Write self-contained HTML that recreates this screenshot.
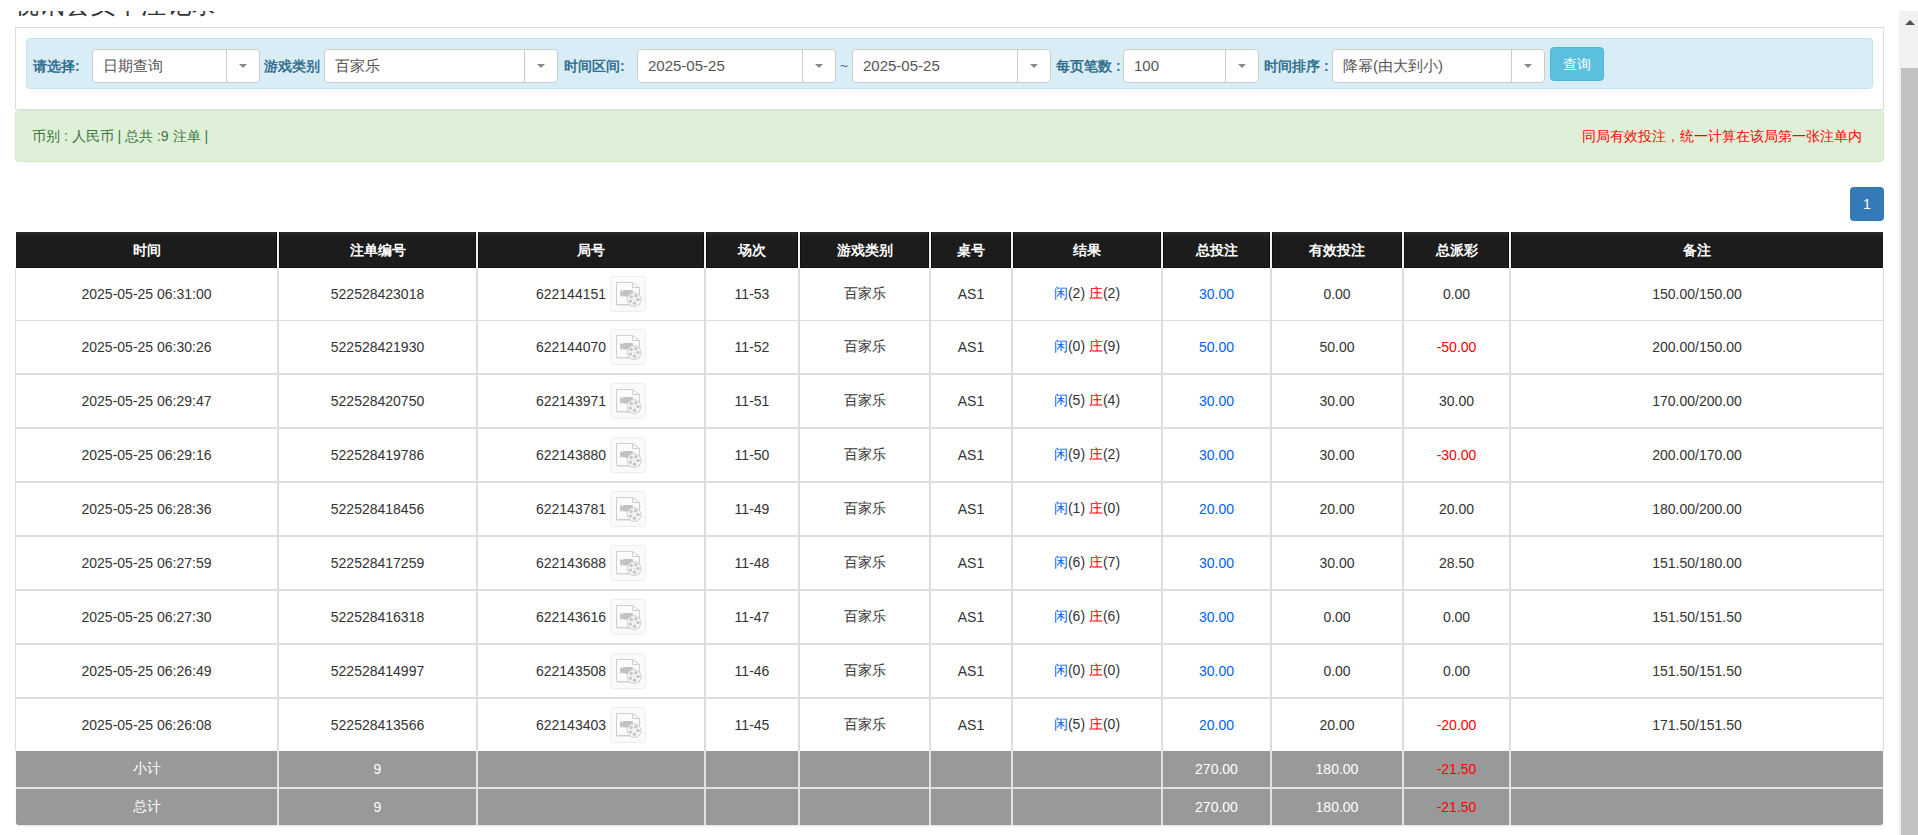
<!DOCTYPE html><html><head><meta charset="utf-8"><title>视讯会员下注记录</title><style>
html,body{margin:0;padding:0;background:#fff;}
body{width:1918px;height:835px;overflow:hidden;position:relative;font-family:"Liberation Sans",sans-serif;font-size:14px;color:#333;}
.ab{position:absolute;box-sizing:border-box;}
.c{position:absolute;display:flex;align-items:center;justify-content:center;white-space:nowrap;box-sizing:border-box;}
.sel{position:absolute;box-sizing:border-box;height:34px;top:49px;border:1px solid #ccc;border-radius:4px;background:#fff;}
.sel .t{position:absolute;left:10px;top:0;height:32px;line-height:32px;font-size:15px;color:#555;white-space:nowrap;}
.sel .sp{position:absolute;right:32px;top:0;width:1px;height:32px;background:#ccc;}
.sel .cr{position:absolute;right:12px;top:14px;width:0;height:0;border-left:4px solid transparent;border-right:4px solid transparent;border-top:4px solid #888;}
.lb{position:absolute;top:49px;height:34px;line-height:34px;font-weight:bold;color:#31708f;white-space:nowrap;font-size:14px;}
.hd{background:#1c1c1c;color:#fff;font-weight:bold;}
.vl{position:absolute;width:2px;}
.icon{position:absolute;width:36px;height:36px;box-sizing:border-box;border:1px solid #eee;border-radius:4px;background:#fafafa;}
.bl{color:#0062ff}.rd{color:#ff0000}

</style></head><body>
<div class="ab" style="left:14px;top:-12px;font-size:25px;line-height:32px;letter-spacing:0.45px;color:#333;white-space:nowrap;">视讯会员下注记录</div>
<div class="ab" style="left:0;top:0;width:1918px;height:11px;background:#fff;"></div>
<div class="ab" style="left:15px;top:27px;width:1869px;height:83px;border:1px solid #ddd;"></div>
<div class="ab" style="left:26px;top:38px;width:1847px;height:51px;border:1px solid #bce8f1;background:#d9edf7;border-radius:4px;"></div>
<div class="lb" style="left:33px;">请选择:</div>
<div class="sel" style="left:92px;width:168px;"><div class="t">日期查询</div><div class="sp"></div><div class="cr"></div></div>
<div class="lb" style="left:264px;">游戏类别</div>
<div class="sel" style="left:324px;width:234px;"><div class="t">百家乐</div><div class="sp"></div><div class="cr"></div></div>
<div class="lb" style="left:564px;">时间区间:</div>
<div class="sel" style="left:637px;width:199px;"><div class="t">2025-05-25</div><div class="sp"></div><div class="cr"></div></div>
<div class="lb" style="left:840px;font-weight:normal;">~</div>
<div class="sel" style="left:852px;width:199px;"><div class="t">2025-05-25</div><div class="sp"></div><div class="cr"></div></div>
<div class="lb" style="left:1056px;">每页笔数 :</div>
<div class="sel" style="left:1123px;width:136px;"><div class="t">100</div><div class="sp"></div><div class="cr"></div></div>
<div class="lb" style="left:1264px;">时间排序 :</div>
<div class="sel" style="left:1332px;width:213px;"><div class="t">降幂(由大到小)</div><div class="sp"></div><div class="cr"></div></div>
<div class="c" style="left:1550px;top:47px;width:54px;height:34px;background:#5bc0de;border:1px solid #46b8da;border-radius:4px;color:#fff;padding-top:2px;">查询</div>
<div class="ab" style="left:15px;top:110px;width:1869px;height:52px;border:1px solid #d6e9c6;background:#dff0d8;border-radius:4px;"></div>
<div class="ab" style="left:32px;top:126px;height:20px;line-height:20px;color:#3c763d;white-space:nowrap;">币别 : 人民币 | 总共 :9 注单 |</div>
<div class="ab" style="right:56px;top:126px;height:20px;line-height:20px;color:#ff0000;white-space:nowrap;">同局有效投注，统一计算在该局第一张注单内</div>
<div class="c" style="left:1850px;top:187px;width:34px;height:34px;background:#337ab7;border-radius:4px;color:#fff;">1</div>
<div class="ab hd" style="left:16px;top:232px;width:1867px;height:36px;background:linear-gradient(#2c2c2c,#1c1c1c 5px);border-bottom:1px solid #101010;"></div>
<div class="c" style="left:16px;top:233px;width:261px;height:36px;color:#fff;font-weight:bold;">时间</div>
<div class="c" style="left:279px;top:233px;width:197px;height:36px;color:#fff;font-weight:bold;">注单编号</div>
<div class="c" style="left:478px;top:233px;width:226px;height:36px;color:#fff;font-weight:bold;">局号</div>
<div class="c" style="left:706px;top:233px;width:92px;height:36px;color:#fff;font-weight:bold;">场次</div>
<div class="c" style="left:800px;top:233px;width:129px;height:36px;color:#fff;font-weight:bold;">游戏类别</div>
<div class="c" style="left:931px;top:233px;width:80px;height:36px;color:#fff;font-weight:bold;">桌号</div>
<div class="c" style="left:1013px;top:233px;width:148px;height:36px;color:#fff;font-weight:bold;">结果</div>
<div class="c" style="left:1163px;top:233px;width:107px;height:36px;color:#fff;font-weight:bold;">总投注</div>
<div class="c" style="left:1272px;top:233px;width:130px;height:36px;color:#fff;font-weight:bold;">有效投注</div>
<div class="c" style="left:1404px;top:233px;width:105px;height:36px;color:#fff;font-weight:bold;">总派彩</div>
<div class="c" style="left:1511px;top:233px;width:372px;height:36px;color:#fff;font-weight:bold;">备注</div>
<div class="ab" style="left:276px;top:232px;width:1px;height:36px;background:#101010;"></div>
<div class="ab" style="left:279px;top:232px;width:1px;height:36px;background:#101010;"></div>
<div class="ab" style="left:277px;top:232px;width:2px;height:36px;background:#f2f2f2;"></div>
<div class="ab" style="left:475px;top:232px;width:1px;height:36px;background:#101010;"></div>
<div class="ab" style="left:478px;top:232px;width:1px;height:36px;background:#101010;"></div>
<div class="ab" style="left:476px;top:232px;width:2px;height:36px;background:#f2f2f2;"></div>
<div class="ab" style="left:703px;top:232px;width:1px;height:36px;background:#101010;"></div>
<div class="ab" style="left:706px;top:232px;width:1px;height:36px;background:#101010;"></div>
<div class="ab" style="left:704px;top:232px;width:2px;height:36px;background:#f2f2f2;"></div>
<div class="ab" style="left:797px;top:232px;width:1px;height:36px;background:#101010;"></div>
<div class="ab" style="left:800px;top:232px;width:1px;height:36px;background:#101010;"></div>
<div class="ab" style="left:798px;top:232px;width:2px;height:36px;background:#f2f2f2;"></div>
<div class="ab" style="left:928px;top:232px;width:1px;height:36px;background:#101010;"></div>
<div class="ab" style="left:931px;top:232px;width:1px;height:36px;background:#101010;"></div>
<div class="ab" style="left:929px;top:232px;width:2px;height:36px;background:#f2f2f2;"></div>
<div class="ab" style="left:1010px;top:232px;width:1px;height:36px;background:#101010;"></div>
<div class="ab" style="left:1013px;top:232px;width:1px;height:36px;background:#101010;"></div>
<div class="ab" style="left:1011px;top:232px;width:2px;height:36px;background:#f2f2f2;"></div>
<div class="ab" style="left:1160px;top:232px;width:1px;height:36px;background:#101010;"></div>
<div class="ab" style="left:1163px;top:232px;width:1px;height:36px;background:#101010;"></div>
<div class="ab" style="left:1161px;top:232px;width:2px;height:36px;background:#f2f2f2;"></div>
<div class="ab" style="left:1269px;top:232px;width:1px;height:36px;background:#101010;"></div>
<div class="ab" style="left:1272px;top:232px;width:1px;height:36px;background:#101010;"></div>
<div class="ab" style="left:1270px;top:232px;width:2px;height:36px;background:#f2f2f2;"></div>
<div class="ab" style="left:1401px;top:232px;width:1px;height:36px;background:#101010;"></div>
<div class="ab" style="left:1404px;top:232px;width:1px;height:36px;background:#101010;"></div>
<div class="ab" style="left:1402px;top:232px;width:2px;height:36px;background:#f2f2f2;"></div>
<div class="ab" style="left:1508px;top:232px;width:1px;height:36px;background:#101010;"></div>
<div class="ab" style="left:1511px;top:232px;width:1px;height:36px;background:#101010;"></div>
<div class="ab" style="left:1509px;top:232px;width:2px;height:36px;background:#f2f2f2;"></div>
<div class="c" style="left:16px;top:268px;width:261px;height:52px;"><span>2025-05-25 06:31:00</span></div>
<div class="c" style="left:279px;top:268px;width:197px;height:52px;"><span>522528423018</span></div>
<div class="c" style="left:478px;top:268px;width:226px;height:52px;">622144151<span style="display:inline-block;width:4px"></span><span style="position:relative;display:inline-block;width:36px;height:36px;"><span class="icon" style="left:0;top:0"><svg width="36" height="36" viewBox="0 0 36 36" style="position:absolute;left:-1px;top:-1px"><path d="M6.5 6.5h16l7 5v17h-23z" fill="#fbfbfb" stroke="#cecece" stroke-width="1"/><path d="M22.5 6.5v5h7" fill="none" stroke="#cecece" stroke-width="1"/><path d="M7 29.5h16" stroke="#e6e6e6" stroke-width="1"/><path d="M10.2 14L12.4 15.3H13.1V13.9H22.8V20.6H13.1V19.6H12.4L10.2 21Z" fill="#c2c2c2"/><circle cx="24.1" cy="23.6" r="6.9" fill="#f6f6f6" stroke="#d0d0d0" stroke-width="1"/><circle cx="21.3" cy="20.6" r="1.7" fill="#c4c4c4"/><circle cx="25.8" cy="19.8" r="1.7" fill="#c4c4c4"/><circle cx="28" cy="23.6" r="1.7" fill="#c4c4c4"/><circle cx="24.5" cy="27.2" r="1.7" fill="#c4c4c4"/><circle cx="20.4" cy="25.1" r="1.7" fill="#c4c4c4"/><circle cx="23.8" cy="23.4" r="0.5" fill="#d0d0d0"/></svg></span></span></div>
<div class="c" style="left:706px;top:268px;width:92px;height:52px;"><span>11-53</span></div>
<div class="c" style="left:800px;top:268px;width:129px;height:52px;"><span>百家乐</span></div>
<div class="c" style="left:931px;top:268px;width:80px;height:52px;"><span>AS1</span></div>
<div class="c" style="left:1013px;top:268px;width:148px;height:52px;"><span><span class="bl">闲</span>(2) <span class="rd">庄</span>(2)</span></div>
<div class="c" style="left:1163px;top:268px;width:107px;height:52px;"><span><span class="bl">30.00</span></span></div>
<div class="c" style="left:1272px;top:268px;width:130px;height:52px;"><span>0.00</span></div>
<div class="c" style="left:1404px;top:268px;width:105px;height:52px;"><span>0.00</span></div>
<div class="c" style="left:1511px;top:268px;width:372px;height:52px;"><span>150.00/150.00</span></div>
<div class="ab" style="left:15px;top:320px;width:1869px;height:1px;background:#ddd;"></div>
<div class="c" style="left:16px;top:321px;width:261px;height:52px;"><span>2025-05-25 06:30:26</span></div>
<div class="c" style="left:279px;top:321px;width:197px;height:52px;"><span>522528421930</span></div>
<div class="c" style="left:478px;top:321px;width:226px;height:52px;">622144070<span style="display:inline-block;width:4px"></span><span style="position:relative;display:inline-block;width:36px;height:36px;"><span class="icon" style="left:0;top:0"><svg width="36" height="36" viewBox="0 0 36 36" style="position:absolute;left:-1px;top:-1px"><path d="M6.5 6.5h16l7 5v17h-23z" fill="#fbfbfb" stroke="#cecece" stroke-width="1"/><path d="M22.5 6.5v5h7" fill="none" stroke="#cecece" stroke-width="1"/><path d="M7 29.5h16" stroke="#e6e6e6" stroke-width="1"/><path d="M10.2 14L12.4 15.3H13.1V13.9H22.8V20.6H13.1V19.6H12.4L10.2 21Z" fill="#c2c2c2"/><circle cx="24.1" cy="23.6" r="6.9" fill="#f6f6f6" stroke="#d0d0d0" stroke-width="1"/><circle cx="21.3" cy="20.6" r="1.7" fill="#c4c4c4"/><circle cx="25.8" cy="19.8" r="1.7" fill="#c4c4c4"/><circle cx="28" cy="23.6" r="1.7" fill="#c4c4c4"/><circle cx="24.5" cy="27.2" r="1.7" fill="#c4c4c4"/><circle cx="20.4" cy="25.1" r="1.7" fill="#c4c4c4"/><circle cx="23.8" cy="23.4" r="0.5" fill="#d0d0d0"/></svg></span></span></div>
<div class="c" style="left:706px;top:321px;width:92px;height:52px;"><span>11-52</span></div>
<div class="c" style="left:800px;top:321px;width:129px;height:52px;"><span>百家乐</span></div>
<div class="c" style="left:931px;top:321px;width:80px;height:52px;"><span>AS1</span></div>
<div class="c" style="left:1013px;top:321px;width:148px;height:52px;"><span><span class="bl">闲</span>(0) <span class="rd">庄</span>(9)</span></div>
<div class="c" style="left:1163px;top:321px;width:107px;height:52px;"><span><span class="bl">50.00</span></span></div>
<div class="c" style="left:1272px;top:321px;width:130px;height:52px;"><span>50.00</span></div>
<div class="c" style="left:1404px;top:321px;width:105px;height:52px;"><span><span class="rd">-50.00</span></span></div>
<div class="c" style="left:1511px;top:321px;width:372px;height:52px;"><span>200.00/150.00</span></div>
<div class="ab" style="left:15px;top:373px;width:1869px;height:2px;background:#ddd;"></div>
<div class="c" style="left:16px;top:375px;width:261px;height:52px;"><span>2025-05-25 06:29:47</span></div>
<div class="c" style="left:279px;top:375px;width:197px;height:52px;"><span>522528420750</span></div>
<div class="c" style="left:478px;top:375px;width:226px;height:52px;">622143971<span style="display:inline-block;width:4px"></span><span style="position:relative;display:inline-block;width:36px;height:36px;"><span class="icon" style="left:0;top:0"><svg width="36" height="36" viewBox="0 0 36 36" style="position:absolute;left:-1px;top:-1px"><path d="M6.5 6.5h16l7 5v17h-23z" fill="#fbfbfb" stroke="#cecece" stroke-width="1"/><path d="M22.5 6.5v5h7" fill="none" stroke="#cecece" stroke-width="1"/><path d="M7 29.5h16" stroke="#e6e6e6" stroke-width="1"/><path d="M10.2 14L12.4 15.3H13.1V13.9H22.8V20.6H13.1V19.6H12.4L10.2 21Z" fill="#c2c2c2"/><circle cx="24.1" cy="23.6" r="6.9" fill="#f6f6f6" stroke="#d0d0d0" stroke-width="1"/><circle cx="21.3" cy="20.6" r="1.7" fill="#c4c4c4"/><circle cx="25.8" cy="19.8" r="1.7" fill="#c4c4c4"/><circle cx="28" cy="23.6" r="1.7" fill="#c4c4c4"/><circle cx="24.5" cy="27.2" r="1.7" fill="#c4c4c4"/><circle cx="20.4" cy="25.1" r="1.7" fill="#c4c4c4"/><circle cx="23.8" cy="23.4" r="0.5" fill="#d0d0d0"/></svg></span></span></div>
<div class="c" style="left:706px;top:375px;width:92px;height:52px;"><span>11-51</span></div>
<div class="c" style="left:800px;top:375px;width:129px;height:52px;"><span>百家乐</span></div>
<div class="c" style="left:931px;top:375px;width:80px;height:52px;"><span>AS1</span></div>
<div class="c" style="left:1013px;top:375px;width:148px;height:52px;"><span><span class="bl">闲</span>(5) <span class="rd">庄</span>(4)</span></div>
<div class="c" style="left:1163px;top:375px;width:107px;height:52px;"><span><span class="bl">30.00</span></span></div>
<div class="c" style="left:1272px;top:375px;width:130px;height:52px;"><span>30.00</span></div>
<div class="c" style="left:1404px;top:375px;width:105px;height:52px;"><span>30.00</span></div>
<div class="c" style="left:1511px;top:375px;width:372px;height:52px;"><span>170.00/200.00</span></div>
<div class="ab" style="left:15px;top:427px;width:1869px;height:2px;background:#ddd;"></div>
<div class="c" style="left:16px;top:429px;width:261px;height:52px;"><span>2025-05-25 06:29:16</span></div>
<div class="c" style="left:279px;top:429px;width:197px;height:52px;"><span>522528419786</span></div>
<div class="c" style="left:478px;top:429px;width:226px;height:52px;">622143880<span style="display:inline-block;width:4px"></span><span style="position:relative;display:inline-block;width:36px;height:36px;"><span class="icon" style="left:0;top:0"><svg width="36" height="36" viewBox="0 0 36 36" style="position:absolute;left:-1px;top:-1px"><path d="M6.5 6.5h16l7 5v17h-23z" fill="#fbfbfb" stroke="#cecece" stroke-width="1"/><path d="M22.5 6.5v5h7" fill="none" stroke="#cecece" stroke-width="1"/><path d="M7 29.5h16" stroke="#e6e6e6" stroke-width="1"/><path d="M10.2 14L12.4 15.3H13.1V13.9H22.8V20.6H13.1V19.6H12.4L10.2 21Z" fill="#c2c2c2"/><circle cx="24.1" cy="23.6" r="6.9" fill="#f6f6f6" stroke="#d0d0d0" stroke-width="1"/><circle cx="21.3" cy="20.6" r="1.7" fill="#c4c4c4"/><circle cx="25.8" cy="19.8" r="1.7" fill="#c4c4c4"/><circle cx="28" cy="23.6" r="1.7" fill="#c4c4c4"/><circle cx="24.5" cy="27.2" r="1.7" fill="#c4c4c4"/><circle cx="20.4" cy="25.1" r="1.7" fill="#c4c4c4"/><circle cx="23.8" cy="23.4" r="0.5" fill="#d0d0d0"/></svg></span></span></div>
<div class="c" style="left:706px;top:429px;width:92px;height:52px;"><span>11-50</span></div>
<div class="c" style="left:800px;top:429px;width:129px;height:52px;"><span>百家乐</span></div>
<div class="c" style="left:931px;top:429px;width:80px;height:52px;"><span>AS1</span></div>
<div class="c" style="left:1013px;top:429px;width:148px;height:52px;"><span><span class="bl">闲</span>(9) <span class="rd">庄</span>(2)</span></div>
<div class="c" style="left:1163px;top:429px;width:107px;height:52px;"><span><span class="bl">30.00</span></span></div>
<div class="c" style="left:1272px;top:429px;width:130px;height:52px;"><span>30.00</span></div>
<div class="c" style="left:1404px;top:429px;width:105px;height:52px;"><span><span class="rd">-30.00</span></span></div>
<div class="c" style="left:1511px;top:429px;width:372px;height:52px;"><span>200.00/170.00</span></div>
<div class="ab" style="left:15px;top:481px;width:1869px;height:2px;background:#ddd;"></div>
<div class="c" style="left:16px;top:483px;width:261px;height:52px;"><span>2025-05-25 06:28:36</span></div>
<div class="c" style="left:279px;top:483px;width:197px;height:52px;"><span>522528418456</span></div>
<div class="c" style="left:478px;top:483px;width:226px;height:52px;">622143781<span style="display:inline-block;width:4px"></span><span style="position:relative;display:inline-block;width:36px;height:36px;"><span class="icon" style="left:0;top:0"><svg width="36" height="36" viewBox="0 0 36 36" style="position:absolute;left:-1px;top:-1px"><path d="M6.5 6.5h16l7 5v17h-23z" fill="#fbfbfb" stroke="#cecece" stroke-width="1"/><path d="M22.5 6.5v5h7" fill="none" stroke="#cecece" stroke-width="1"/><path d="M7 29.5h16" stroke="#e6e6e6" stroke-width="1"/><path d="M10.2 14L12.4 15.3H13.1V13.9H22.8V20.6H13.1V19.6H12.4L10.2 21Z" fill="#c2c2c2"/><circle cx="24.1" cy="23.6" r="6.9" fill="#f6f6f6" stroke="#d0d0d0" stroke-width="1"/><circle cx="21.3" cy="20.6" r="1.7" fill="#c4c4c4"/><circle cx="25.8" cy="19.8" r="1.7" fill="#c4c4c4"/><circle cx="28" cy="23.6" r="1.7" fill="#c4c4c4"/><circle cx="24.5" cy="27.2" r="1.7" fill="#c4c4c4"/><circle cx="20.4" cy="25.1" r="1.7" fill="#c4c4c4"/><circle cx="23.8" cy="23.4" r="0.5" fill="#d0d0d0"/></svg></span></span></div>
<div class="c" style="left:706px;top:483px;width:92px;height:52px;"><span>11-49</span></div>
<div class="c" style="left:800px;top:483px;width:129px;height:52px;"><span>百家乐</span></div>
<div class="c" style="left:931px;top:483px;width:80px;height:52px;"><span>AS1</span></div>
<div class="c" style="left:1013px;top:483px;width:148px;height:52px;"><span><span class="bl">闲</span>(1) <span class="rd">庄</span>(0)</span></div>
<div class="c" style="left:1163px;top:483px;width:107px;height:52px;"><span><span class="bl">20.00</span></span></div>
<div class="c" style="left:1272px;top:483px;width:130px;height:52px;"><span>20.00</span></div>
<div class="c" style="left:1404px;top:483px;width:105px;height:52px;"><span>20.00</span></div>
<div class="c" style="left:1511px;top:483px;width:372px;height:52px;"><span>180.00/200.00</span></div>
<div class="ab" style="left:15px;top:535px;width:1869px;height:2px;background:#ddd;"></div>
<div class="c" style="left:16px;top:537px;width:261px;height:52px;"><span>2025-05-25 06:27:59</span></div>
<div class="c" style="left:279px;top:537px;width:197px;height:52px;"><span>522528417259</span></div>
<div class="c" style="left:478px;top:537px;width:226px;height:52px;">622143688<span style="display:inline-block;width:4px"></span><span style="position:relative;display:inline-block;width:36px;height:36px;"><span class="icon" style="left:0;top:0"><svg width="36" height="36" viewBox="0 0 36 36" style="position:absolute;left:-1px;top:-1px"><path d="M6.5 6.5h16l7 5v17h-23z" fill="#fbfbfb" stroke="#cecece" stroke-width="1"/><path d="M22.5 6.5v5h7" fill="none" stroke="#cecece" stroke-width="1"/><path d="M7 29.5h16" stroke="#e6e6e6" stroke-width="1"/><path d="M10.2 14L12.4 15.3H13.1V13.9H22.8V20.6H13.1V19.6H12.4L10.2 21Z" fill="#c2c2c2"/><circle cx="24.1" cy="23.6" r="6.9" fill="#f6f6f6" stroke="#d0d0d0" stroke-width="1"/><circle cx="21.3" cy="20.6" r="1.7" fill="#c4c4c4"/><circle cx="25.8" cy="19.8" r="1.7" fill="#c4c4c4"/><circle cx="28" cy="23.6" r="1.7" fill="#c4c4c4"/><circle cx="24.5" cy="27.2" r="1.7" fill="#c4c4c4"/><circle cx="20.4" cy="25.1" r="1.7" fill="#c4c4c4"/><circle cx="23.8" cy="23.4" r="0.5" fill="#d0d0d0"/></svg></span></span></div>
<div class="c" style="left:706px;top:537px;width:92px;height:52px;"><span>11-48</span></div>
<div class="c" style="left:800px;top:537px;width:129px;height:52px;"><span>百家乐</span></div>
<div class="c" style="left:931px;top:537px;width:80px;height:52px;"><span>AS1</span></div>
<div class="c" style="left:1013px;top:537px;width:148px;height:52px;"><span><span class="bl">闲</span>(6) <span class="rd">庄</span>(7)</span></div>
<div class="c" style="left:1163px;top:537px;width:107px;height:52px;"><span><span class="bl">30.00</span></span></div>
<div class="c" style="left:1272px;top:537px;width:130px;height:52px;"><span>30.00</span></div>
<div class="c" style="left:1404px;top:537px;width:105px;height:52px;"><span>28.50</span></div>
<div class="c" style="left:1511px;top:537px;width:372px;height:52px;"><span>151.50/180.00</span></div>
<div class="ab" style="left:15px;top:589px;width:1869px;height:2px;background:#ddd;"></div>
<div class="c" style="left:16px;top:591px;width:261px;height:52px;"><span>2025-05-25 06:27:30</span></div>
<div class="c" style="left:279px;top:591px;width:197px;height:52px;"><span>522528416318</span></div>
<div class="c" style="left:478px;top:591px;width:226px;height:52px;">622143616<span style="display:inline-block;width:4px"></span><span style="position:relative;display:inline-block;width:36px;height:36px;"><span class="icon" style="left:0;top:0"><svg width="36" height="36" viewBox="0 0 36 36" style="position:absolute;left:-1px;top:-1px"><path d="M6.5 6.5h16l7 5v17h-23z" fill="#fbfbfb" stroke="#cecece" stroke-width="1"/><path d="M22.5 6.5v5h7" fill="none" stroke="#cecece" stroke-width="1"/><path d="M7 29.5h16" stroke="#e6e6e6" stroke-width="1"/><path d="M10.2 14L12.4 15.3H13.1V13.9H22.8V20.6H13.1V19.6H12.4L10.2 21Z" fill="#c2c2c2"/><circle cx="24.1" cy="23.6" r="6.9" fill="#f6f6f6" stroke="#d0d0d0" stroke-width="1"/><circle cx="21.3" cy="20.6" r="1.7" fill="#c4c4c4"/><circle cx="25.8" cy="19.8" r="1.7" fill="#c4c4c4"/><circle cx="28" cy="23.6" r="1.7" fill="#c4c4c4"/><circle cx="24.5" cy="27.2" r="1.7" fill="#c4c4c4"/><circle cx="20.4" cy="25.1" r="1.7" fill="#c4c4c4"/><circle cx="23.8" cy="23.4" r="0.5" fill="#d0d0d0"/></svg></span></span></div>
<div class="c" style="left:706px;top:591px;width:92px;height:52px;"><span>11-47</span></div>
<div class="c" style="left:800px;top:591px;width:129px;height:52px;"><span>百家乐</span></div>
<div class="c" style="left:931px;top:591px;width:80px;height:52px;"><span>AS1</span></div>
<div class="c" style="left:1013px;top:591px;width:148px;height:52px;"><span><span class="bl">闲</span>(6) <span class="rd">庄</span>(6)</span></div>
<div class="c" style="left:1163px;top:591px;width:107px;height:52px;"><span><span class="bl">30.00</span></span></div>
<div class="c" style="left:1272px;top:591px;width:130px;height:52px;"><span>0.00</span></div>
<div class="c" style="left:1404px;top:591px;width:105px;height:52px;"><span>0.00</span></div>
<div class="c" style="left:1511px;top:591px;width:372px;height:52px;"><span>151.50/151.50</span></div>
<div class="ab" style="left:15px;top:643px;width:1869px;height:2px;background:#ddd;"></div>
<div class="c" style="left:16px;top:645px;width:261px;height:52px;"><span>2025-05-25 06:26:49</span></div>
<div class="c" style="left:279px;top:645px;width:197px;height:52px;"><span>522528414997</span></div>
<div class="c" style="left:478px;top:645px;width:226px;height:52px;">622143508<span style="display:inline-block;width:4px"></span><span style="position:relative;display:inline-block;width:36px;height:36px;"><span class="icon" style="left:0;top:0"><svg width="36" height="36" viewBox="0 0 36 36" style="position:absolute;left:-1px;top:-1px"><path d="M6.5 6.5h16l7 5v17h-23z" fill="#fbfbfb" stroke="#cecece" stroke-width="1"/><path d="M22.5 6.5v5h7" fill="none" stroke="#cecece" stroke-width="1"/><path d="M7 29.5h16" stroke="#e6e6e6" stroke-width="1"/><path d="M10.2 14L12.4 15.3H13.1V13.9H22.8V20.6H13.1V19.6H12.4L10.2 21Z" fill="#c2c2c2"/><circle cx="24.1" cy="23.6" r="6.9" fill="#f6f6f6" stroke="#d0d0d0" stroke-width="1"/><circle cx="21.3" cy="20.6" r="1.7" fill="#c4c4c4"/><circle cx="25.8" cy="19.8" r="1.7" fill="#c4c4c4"/><circle cx="28" cy="23.6" r="1.7" fill="#c4c4c4"/><circle cx="24.5" cy="27.2" r="1.7" fill="#c4c4c4"/><circle cx="20.4" cy="25.1" r="1.7" fill="#c4c4c4"/><circle cx="23.8" cy="23.4" r="0.5" fill="#d0d0d0"/></svg></span></span></div>
<div class="c" style="left:706px;top:645px;width:92px;height:52px;"><span>11-46</span></div>
<div class="c" style="left:800px;top:645px;width:129px;height:52px;"><span>百家乐</span></div>
<div class="c" style="left:931px;top:645px;width:80px;height:52px;"><span>AS1</span></div>
<div class="c" style="left:1013px;top:645px;width:148px;height:52px;"><span><span class="bl">闲</span>(0) <span class="rd">庄</span>(0)</span></div>
<div class="c" style="left:1163px;top:645px;width:107px;height:52px;"><span><span class="bl">30.00</span></span></div>
<div class="c" style="left:1272px;top:645px;width:130px;height:52px;"><span>0.00</span></div>
<div class="c" style="left:1404px;top:645px;width:105px;height:52px;"><span>0.00</span></div>
<div class="c" style="left:1511px;top:645px;width:372px;height:52px;"><span>151.50/151.50</span></div>
<div class="ab" style="left:15px;top:697px;width:1869px;height:2px;background:#ddd;"></div>
<div class="c" style="left:16px;top:699px;width:261px;height:52px;"><span>2025-05-25 06:26:08</span></div>
<div class="c" style="left:279px;top:699px;width:197px;height:52px;"><span>522528413566</span></div>
<div class="c" style="left:478px;top:699px;width:226px;height:52px;">622143403<span style="display:inline-block;width:4px"></span><span style="position:relative;display:inline-block;width:36px;height:36px;"><span class="icon" style="left:0;top:0"><svg width="36" height="36" viewBox="0 0 36 36" style="position:absolute;left:-1px;top:-1px"><path d="M6.5 6.5h16l7 5v17h-23z" fill="#fbfbfb" stroke="#cecece" stroke-width="1"/><path d="M22.5 6.5v5h7" fill="none" stroke="#cecece" stroke-width="1"/><path d="M7 29.5h16" stroke="#e6e6e6" stroke-width="1"/><path d="M10.2 14L12.4 15.3H13.1V13.9H22.8V20.6H13.1V19.6H12.4L10.2 21Z" fill="#c2c2c2"/><circle cx="24.1" cy="23.6" r="6.9" fill="#f6f6f6" stroke="#d0d0d0" stroke-width="1"/><circle cx="21.3" cy="20.6" r="1.7" fill="#c4c4c4"/><circle cx="25.8" cy="19.8" r="1.7" fill="#c4c4c4"/><circle cx="28" cy="23.6" r="1.7" fill="#c4c4c4"/><circle cx="24.5" cy="27.2" r="1.7" fill="#c4c4c4"/><circle cx="20.4" cy="25.1" r="1.7" fill="#c4c4c4"/><circle cx="23.8" cy="23.4" r="0.5" fill="#d0d0d0"/></svg></span></span></div>
<div class="c" style="left:706px;top:699px;width:92px;height:52px;"><span>11-45</span></div>
<div class="c" style="left:800px;top:699px;width:129px;height:52px;"><span>百家乐</span></div>
<div class="c" style="left:931px;top:699px;width:80px;height:52px;"><span>AS1</span></div>
<div class="c" style="left:1013px;top:699px;width:148px;height:52px;"><span><span class="bl">闲</span>(5) <span class="rd">庄</span>(0)</span></div>
<div class="c" style="left:1163px;top:699px;width:107px;height:52px;"><span><span class="bl">20.00</span></span></div>
<div class="c" style="left:1272px;top:699px;width:130px;height:52px;"><span>20.00</span></div>
<div class="c" style="left:1404px;top:699px;width:105px;height:52px;"><span><span class="rd">-20.00</span></span></div>
<div class="c" style="left:1511px;top:699px;width:372px;height:52px;"><span>171.50/151.50</span></div>
<div class="ab" style="left:277px;top:268px;width:2px;height:483px;background:#ddd;"></div>
<div class="ab" style="left:476px;top:268px;width:2px;height:483px;background:#ddd;"></div>
<div class="ab" style="left:704px;top:268px;width:2px;height:483px;background:#ddd;"></div>
<div class="ab" style="left:798px;top:268px;width:2px;height:483px;background:#ddd;"></div>
<div class="ab" style="left:929px;top:268px;width:2px;height:483px;background:#ddd;"></div>
<div class="ab" style="left:1011px;top:268px;width:2px;height:483px;background:#ddd;"></div>
<div class="ab" style="left:1161px;top:268px;width:2px;height:483px;background:#ddd;"></div>
<div class="ab" style="left:1270px;top:268px;width:2px;height:483px;background:#ddd;"></div>
<div class="ab" style="left:1402px;top:268px;width:2px;height:483px;background:#ddd;"></div>
<div class="ab" style="left:1509px;top:268px;width:2px;height:483px;background:#ddd;"></div>
<div class="ab" style="left:15px;top:268px;width:1px;height:483px;background:#ddd;"></div>
<div class="ab" style="left:1883px;top:268px;width:1px;height:483px;background:#ddd;"></div>
<div class="ab" style="left:16px;top:751px;width:1867px;height:74px;background:#999;border-radius:0 0 3px 3px;box-shadow:0 1px 2px rgba(0,0,0,.12);"></div>
<div class="ab" style="left:16px;top:787px;width:1867px;height:2px;background:#e2e2e2;"></div>
<div class="ab" style="left:277px;top:751px;width:2px;height:74px;background:#e2e2e2;"></div>
<div class="ab" style="left:476px;top:751px;width:2px;height:74px;background:#e2e2e2;"></div>
<div class="ab" style="left:704px;top:751px;width:2px;height:74px;background:#e2e2e2;"></div>
<div class="ab" style="left:798px;top:751px;width:2px;height:74px;background:#e2e2e2;"></div>
<div class="ab" style="left:929px;top:751px;width:2px;height:74px;background:#e2e2e2;"></div>
<div class="ab" style="left:1011px;top:751px;width:2px;height:74px;background:#e2e2e2;"></div>
<div class="ab" style="left:1161px;top:751px;width:2px;height:74px;background:#e2e2e2;"></div>
<div class="ab" style="left:1270px;top:751px;width:2px;height:74px;background:#e2e2e2;"></div>
<div class="ab" style="left:1402px;top:751px;width:2px;height:74px;background:#e2e2e2;"></div>
<div class="ab" style="left:1509px;top:751px;width:2px;height:74px;background:#e2e2e2;"></div>
<div class="c" style="left:16px;top:751px;width:261px;height:36px;color:#fff;">小计</div>
<div class="c" style="left:279px;top:751px;width:197px;height:36px;color:#fff;">9</div>
<div class="c" style="left:1163px;top:751px;width:107px;height:36px;color:#fff;">270.00</div>
<div class="c" style="left:1272px;top:751px;width:130px;height:36px;color:#fff;">180.00</div>
<div class="c" style="left:1404px;top:751px;width:105px;height:36px;color:#fff;"><span class="rd">-21.50</span></div>
<div class="c" style="left:16px;top:789px;width:261px;height:36px;color:#fff;">总计</div>
<div class="c" style="left:279px;top:789px;width:197px;height:36px;color:#fff;">9</div>
<div class="c" style="left:1163px;top:789px;width:107px;height:36px;color:#fff;">270.00</div>
<div class="c" style="left:1272px;top:789px;width:130px;height:36px;color:#fff;">180.00</div>
<div class="c" style="left:1404px;top:789px;width:105px;height:36px;color:#fff;"><span class="rd">-21.50</span></div>
<div class="ab" style="left:1899px;top:11px;width:19px;height:824px;background:#f1f1f1;"></div>
<div class="ab" style="left:1905px;top:20px;width:0;height:0;border-left:5px solid transparent;border-right:5px solid transparent;border-bottom:5px solid #505050;"></div>
<div class="ab" style="left:1901px;top:68px;width:17px;height:767px;background:#c1c1c1;"></div>
</body></html>
